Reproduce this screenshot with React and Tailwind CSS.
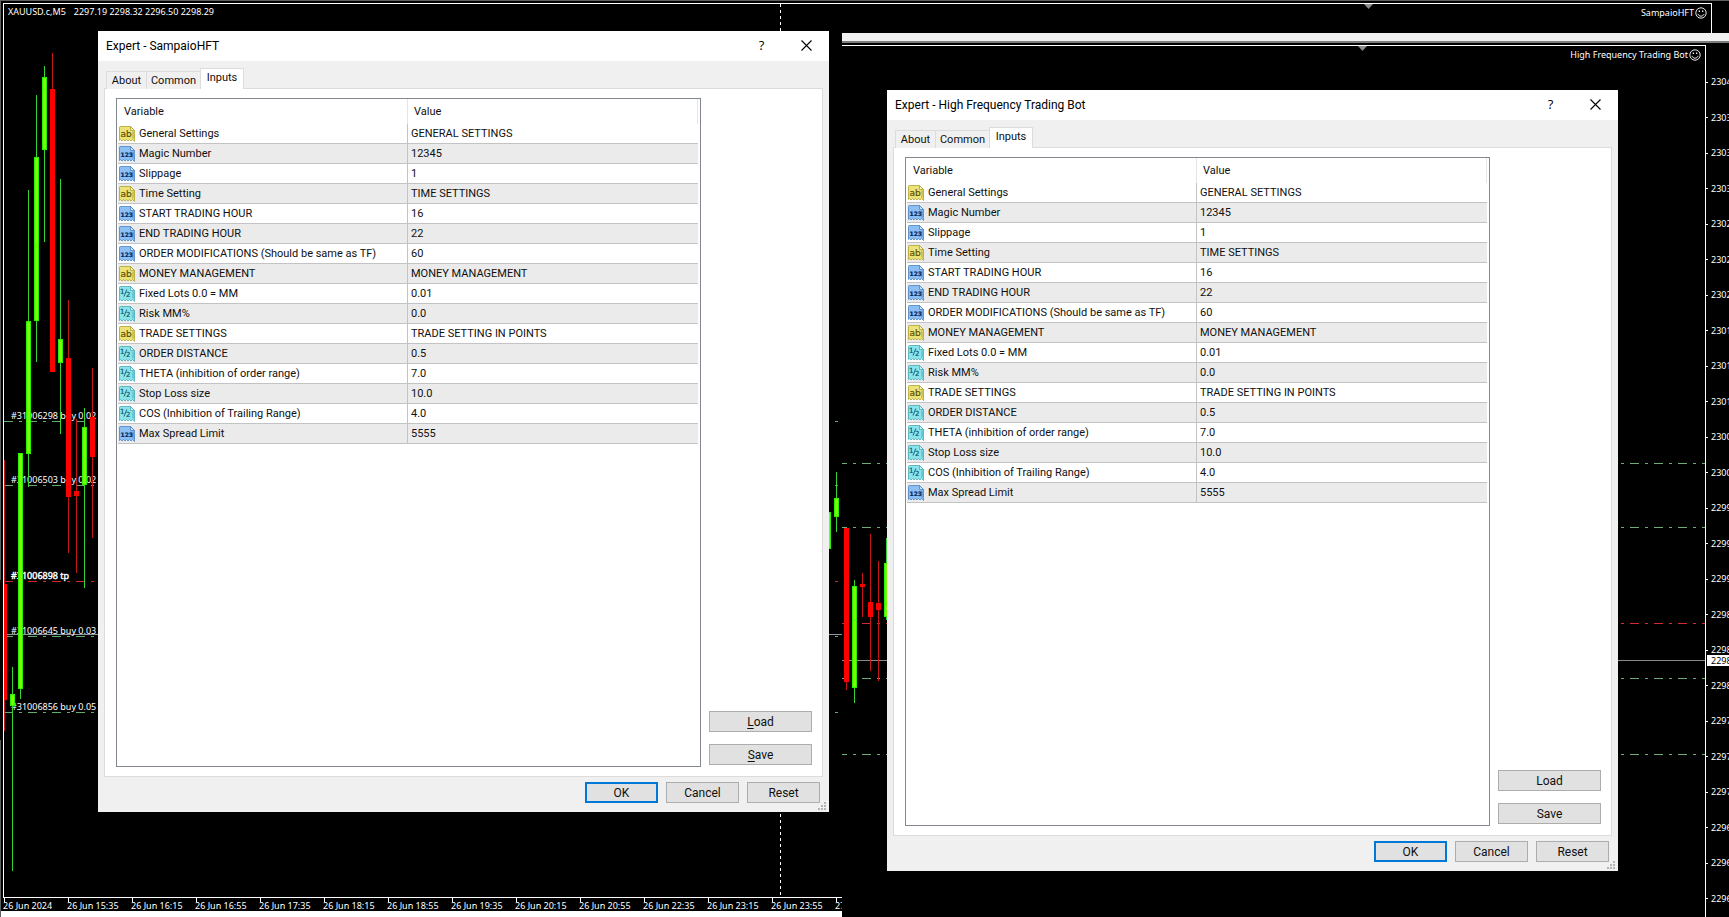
import React from 'react';

const INPUTS = [
  ['ab', 'General Settings', 'GENERAL SETTINGS'],
  ['123', 'Magic Number', '12345'],
  ['123', 'Slippage', '1'],
  ['ab', 'Time Setting', 'TIME SETTINGS'],
  ['123', 'START TRADING HOUR', '16'],
  ['123', 'END TRADING HOUR', '22'],
  ['123', 'ORDER MODIFICATIONS (Should be same as TF)', '60'],
  ['ab', 'MONEY MANAGEMENT', 'MONEY MANAGEMENT'],
  ['half', 'Fixed Lots 0.0 = MM', '0.01'],
  ['half', 'Risk MM%', '0.0'],
  ['ab', 'TRADE SETTINGS', 'TRADE SETTING IN POINTS'],
  ['half', 'ORDER DISTANCE', '0.5'],
  ['half', 'THETA (inhibition of order range)', '7.0'],
  ['half', 'Stop Loss size', '10.0'],
  ['half', 'COS (Inhibition of Trailing Range)', '4.0'],
  ['123', 'Max Spread Limit', '5555'],
];

const TIMES = [
  '26 Jun 2024', '26 Jun 15:35', '26 Jun 16:15', '26 Jun 16:55', '26 Jun 17:35',
  '26 Jun 18:15', '26 Jun 18:55', '26 Jun 19:35', '26 Jun 20:15', '26 Jun 20:55',
  '26 Jun 22:35', '26 Jun 23:15', '26 Jun 23:55', '27',
];

const PRICES = [
  '2304', '2303', '2303', '2303', '2302', '2302', '2302', '2301', '2301', '2301', '2300', '2300',
  '2299', '2299', '2299', '2298', '2298', '2298', '2297', '2297', '2297', '2296', '2296', '2296',
];

// left, high, open/close top, open/close bottom, low, rising
const CANDLES_A = [
  [2, 460, 584, 700, 731, false],
  [10, 667, 694, 706, 871, true],
  [18, 453, 453, 689, 699, true],
  [26, 190, 321, 454, 487, true],
  [34, 95, 157, 321, 362, true],
  [42, 66, 77, 150, 242, true],
  [50, 53, 89, 372, 372, false],
  [58, 179, 339, 363, 434, true],
  [66, 300, 358, 497, 553, false],
  [74, 419, 491, 496, 573, false],
  [82, 408, 427, 485, 588, true],
  [90, 368, 417, 457, 538, false],
  [826, 512, 512, 549, 549, true],
  [834, 472, 498, 517, 532, true],
];

// x is measured from the left edge of the second chart, y from its top
const CANDLES_B = [
  [2, 495, 495, 649, 657, false],
  [10, 547, 553, 655, 670, true],
  [18, 540, 551, 554, 584, false],
  [26, 501, 569, 584, 638, false],
  [34, 528, 570, 577, 648, false],
  [42, 505, 530, 584, 587, true],
];

const ORDERS = [
  ['#31006298 buy 0.02', 421],
  ['#31006503 buy 0.02', 485],
  ['#31006645 buy 0.03', 636],
  ['#31006856 buy 0.05', 712],
];

function Candles({ data }) {
  return data.map(([x, high, top, bottom, low, up]) => (
    <g key={x}>
      <rect x={x + 2} y={high} width="1" height={low - high} fill={up ? '#35d435' : '#c41616'} />
      <rect x={x} y={top} width="5" height={bottom - top} fill={up ? '#28f400' : '#ff0000'} />
      {up && <rect x={x + 1} y={top + 1} width="3" height={bottom - top - 2} fill="#7bff00" />}
    </g>
  ));
}

function Level({ y, from, color }) {
  return (
    <line x1={from} x2="100%" y1={y + 0.5} y2={y + 0.5} stroke={color} strokeDasharray="9 6 3 6" />
  );
}

function Smiley() {
  return (
    <svg width="12" height="12" viewBox="0 0 12 12" fill="none" stroke="#fff" aria-hidden="true">
      <circle cx="6" cy="6" r="5.2" strokeWidth="0.9" />
      <path d="M2.9 6.9c.6 1.5 1.7 2.3 3.1 2.3s2.5-.8 3.1-2.3" strokeWidth="0.9" />
      <path d="M4.3 3.4v1.6M7.7 3.4v1.6" strokeWidth="1.2" />
    </svg>
  );
}

function Marker({ className }) {
  return (
    <svg className={className} width="9" height="5" viewBox="0 0 9 5" aria-hidden="true">
      <path d="M0 0h9L4.500 5z" fill="#8c8c8c" />
    </svg>
  );
}

function MainChart() {
  return (
    <section className="absolute inset-0 border-t border-l border-[#5c6060] bg-black">
      <svg className="absolute -top-px -left-px h-full w-full" shapeRendering="crispEdges" aria-hidden="true">
        <line x1="3" x2="1711" y1="3.500" y2="3.500" stroke="#fff" />
        <line x1="1711.500" x2="1711.500" y1="3" y2="33" stroke="#fff" />
        <line x1="3.500" x2="3.500" y1="3" y2="898" stroke="#fff" />
        <line x1="780.500" x2="780.500" y1="4" y2="897" stroke="#fff" strokeDasharray="3 3" />
        <line x1="7" x2="100%" y1="634.500" y2="634.500" stroke="#8d97a5" />
        {ORDERS.map(([label, y]) => (
          <g key={label}>
            <Level y={y} from={4} color="#5fae6c" />
            <text x="11" y={y - 2} fill="#fff" fontSize="9" shapeRendering="auto">{label}</text>
          </g>
        ))}
        <Level y={581} from={4} color="#d02828" />
        <text x="11" y="579" fill="#fff" stroke="#fff" strokeWidth="0.4" fontSize="9">#31006898 tp</text>
        <Candles data={CANDLES_A} />
        <rect x="0" y="580" width="3" height="160" fill="#000" />
        <rect x="3" y="4" width="1" height="893" fill="#fff" />
      </svg>
      <header className="absolute top-[3px] left-[7px] flex h-4 items-center gap-2 text-[9px] text-white">
        <span>XAUUSD.c,M5</span>
        <span>2297.19 2298.32 2296.50 2298.29</span>
      </header>
      <Marker className="absolute top-[3px] left-[1363px]" />
      <div className="absolute top-1 right-[22px] flex h-4 items-center gap-px text-[9px] text-white">
        <span>SampaioHFT</span>
        <Smiley />
      </div>
      <footer className="absolute bottom-0 left-0 w-[842px] border-b-[6px] border-white bg-black pl-0.5">
        <ol className="flex h-3.5 border-t border-white text-[9px] leading-3 text-white">
          {TIMES.map((t) => (
            <li key={t} className="relative w-16 pt-0.5 whitespace-nowrap last:w-2 not-last:shrink-0">
              <span className="absolute top-0 left-px h-1 w-px bg-white" />
              {t}
            </li>
          ))}
        </ol>
      </footer>
    </section>
  );
}

function SecondChart() {
  return (
    <section className="absolute top-[33px] right-0 bottom-0 left-[842px] bg-black">
      <div className="h-[10px] border-b-2 border-[#7d7d7d] bg-[#f0f0f0]" />
      <div className="absolute top-3 right-[23px] bottom-0 left-0 border-t border-r border-white" />
      <svg className="absolute top-0 left-0 h-full w-[863px]" shapeRendering="crispEdges" aria-hidden="true">
        <Level y={430} from={-4} color="#6fae78" />
        <Level y={494} from={-4} color="#6fae78" />
        <Level y={590} from={-4} color="#d02c34" />
        <Level y={645} from={-4} color="#6fae78" />
        <Level y={721} from={-4} color="#6fae78" />
        <line x1="0" x2="100%" y1="627.500" y2="627.500" stroke="#8a8a8a" />
        <Candles data={CANDLES_B} />
      </svg>
      <Marker className="absolute top-[13px] left-[516px]" />
      <div className="absolute top-[14px] right-[28px] flex h-4 items-center gap-px text-[9px] text-white">
        <span>High Frequency Trading Bot</span>
        <Smiley />
      </div>
      <ol className="absolute top-[43px] right-0 bottom-3 flex w-6 flex-col justify-between text-[9px] leading-3 text-white">
        {PRICES.map((p, i) => (
          <li key={i} className="flex h-3 items-center gap-[3px]">
            <span className="h-px w-[3px] shrink-0 bg-white" />
            {p}
          </li>
        ))}
      </ol>
      <div className="absolute top-[622px] right-0 h-[11px] w-[22px] bg-white pl-1 text-[9px] leading-[11px] text-black">
        2298
      </div>
    </section>
  );
}

const ICONS = {
  ab: { fill: '#ece27a', dark: '#b0a22c', ink: '#5c5200' },
  123: { fill: '#8cc0f4', dark: '#4a82c4', ink: '#04285c' },
  half: { fill: '#8ae4ea', dark: '#48aab8', ink: '#0a5a70' },
};

function TypeIcon({ type }) {
  const { fill, dark, ink } = ICONS[type];
  return (
    <svg width="16" height="16" viewBox="0 0 16 16" className="block shrink-0" aria-hidden="true">
      <path
        d="M.5 1.500q0-1 1-1H11.500L15.500 4.500V15.500L13.500 13.500 12 15 10.500 13.500 9 15 7.500 13.500 6 15 4.500 13.500 3 15 1.500 13.500 .5 14.500z"
        fill={fill}
        stroke={dark}
        strokeWidth="0.8"
      />
      <path d="M14 5.500V12.500" stroke={dark} strokeOpacity="0.5" strokeWidth="2" />
      <path d="M11.500.5V4.500H15.500z" fill="#fff" fillOpacity="0.6" stroke={dark} strokeWidth="0.8" />
      {type === 'half' ? (
        <g fill={ink} stroke={ink} strokeWidth="0.2" fontFamily="DejaVu Sans" fontSize="7">
          <text x="1" y="8">1</text>
          <text x="7" y="10.500">2</text>
          <path d="M5 10.500L7.800 3.500" strokeWidth="0.9" />
        </g>
      ) : (
        <text
          x="1.500"
          y="11"
          fill={ink}
          fontFamily="DejaVu Sans"
          fontWeight={type === 'ab' ? 400 : 700}
          stroke={ink}
          strokeWidth="0.2"
          fontSize={type === 'ab' ? 9 : 6}
        >
          {type}
        </text>
      )}
    </svg>
  );
}

function PushButton({ children, className = 'w-[73px] border border-[#adadad]' }) {
  return (
    <button type="button" className={`flex h-[21px] items-center justify-center bg-[#e1e1e1] text-xs leading-4 ${className}`}>
      {children}
    </button>
  );
}

function ExpertDialog({ title, accessKeys, className }) {
  const key = accessKeys ? 'underline underline-offset-2' : '';
  return (
    <div
      role="dialog"
      aria-label={title}
      className={`absolute w-[731px] bg-[#f0f0f0] font-['Roboto',sans-serif] text-[11px] text-[#101010] ${className}`}
    >
      <header className="flex h-[30px] items-center bg-white pb-px pl-2 text-black">
        <h2 className="flex-1 text-xs">{title}</h2>
        <button type="button" aria-label="Help" className="flex h-full w-[45px] items-center justify-center font-['Open_Sans',sans-serif] text-[13px]">?</button>
        <button type="button" aria-label="Close" className="flex h-full w-[45px] items-center justify-center">
          <svg width="11" height="11" viewBox="0 0 11 11" stroke="#000" strokeWidth="1.1" aria-hidden="true">
            <path d="M.5.5l10 10M10.500.5l-10 10" />
          </svg>
        </button>
      </header>
      <div className="px-1.5 pt-[7px]">
        <div role="tablist" className="relative -mb-px flex items-end pl-0.5">
          <button type="button" role="tab" aria-selected="false" className="h-[18px] w-[41px] border border-b-0 border-[#dcdcdc] bg-[#f0f0f0] leading-4">About</button>
          <button type="button" role="tab" aria-selected="false" className="h-[18px] w-[53px] border-t border-[#dcdcdc] bg-[#f0f0f0] leading-4">Common</button>
          <button type="button" role="tab" aria-selected="true" className="h-[21px] w-[44px] border border-b-0 border-[#dcdcdc] bg-white pb-0.5 leading-4">Inputs</button>
        </div>
        <div role="tabpanel" className="flex gap-2 border border-[#dcdcdc] bg-white py-[9px] pr-2.5 pl-[11px]">
          <div className="h-[669px] flex-1 border border-[#828790] pr-0.5 pl-px">
            <table className="w-full table-fixed border-separate border-spacing-0 text-left">
              <thead>
                <tr className="h-[25px]">
                  <th className="w-[290px] border-r border-[#e5e5e5] py-0 pt-0.5 pl-1.5 font-normal">Variable</th>
                  <th className="border-r border-[#e5e5e5] py-0 pt-0.5 pl-1.5 font-normal">Value</th>
                </tr>
              </thead>
              <tbody>
                {INPUTS.map(([type, name, value]) => (
                  <tr key={name} className="h-5 leading-4 even:bg-[#ebebeb]">
                    <td className="border-r border-b border-[#c3c3c3] p-0 pt-px pl-px">
                      <div className="flex items-center gap-1">
                        <TypeIcon type={type} />
                        {name}
                      </div>
                    </td>
                    <td className="border-b border-[#c3c3c3] p-0 pt-px pl-[3px]">{value}</td>
                  </tr>
                ))}
              </tbody>
            </table>
          </div>
          <div className="flex w-[103px] flex-col justify-end gap-3 pb-0.5">
            <PushButton className="border border-[#adadad]"><span><span className={key}>L</span>oad</span></PushButton>
            <PushButton className="border border-[#adadad]"><span><span className={key}>S</span>ave</span></PushButton>
          </div>
        </div>
      </div>
      <div className="flex justify-end gap-2 pt-[5px] pr-[9px] pb-[9px]">
        <PushButton className="w-[73px] border-2 border-[#0078d7]">OK</PushButton>
        <PushButton>Cancel</PushButton>
        <PushButton>Reset</PushButton>
      </div>
      <svg className="absolute right-[3px] bottom-0.5" width="8" height="8" fill="#b4b4b4" aria-hidden="true">
        <path d="M6 0h2v2H6zM3 3h2v2H3zM6 3h2v2H6zM0 6h2v2H0zM3 6h2v2H3zM6 6h2v2H6z" />
      </svg>
    </div>
  );
}

export default function App() {
  return (
    <main className="relative h-screen min-h-[880px] w-full overflow-hidden bg-black font-['Noto_Sans',sans-serif]">
      <MainChart />
      <SecondChart />
      <ExpertDialog title="Expert - SampaioHFT" accessKeys className="top-[31px] left-[98px]" />
      <ExpertDialog title="Expert - High Frequency Trading Bot" className="top-[90px] left-[887px]" />
    </main>
  );
}
